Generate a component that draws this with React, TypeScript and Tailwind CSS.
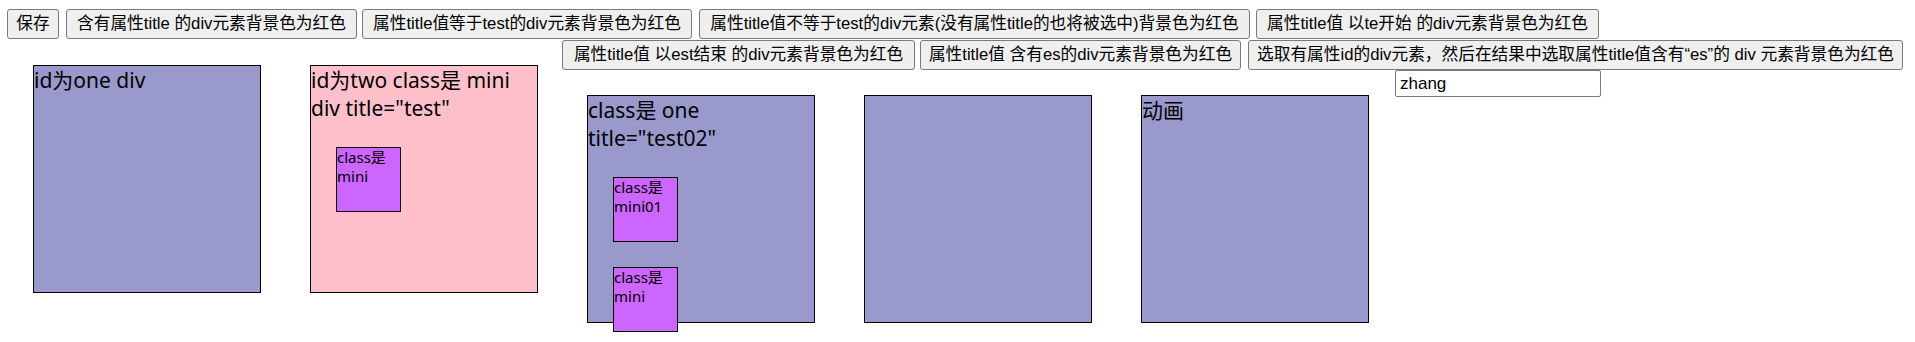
import React from "react";

const btn =
  "h-[30px] shrink-0 flex items-center justify-center bg-[#efefef] border border-[#7a7a7a] rounded-[3px] text-[16.7px] text-black whitespace-nowrap font-['Liberation_Sans','Noto_Sans_CJK_SC',sans-serif] leading-none";

const box =
  "w-[228px] h-[228px] shrink-0 border border-black text-[21px] leading-[28px] text-black font-['Noto_Sans','Noto_Sans_CJK_SC',sans-serif]";

const mini =
  "w-[65px] h-[65px] ml-[25px] mt-[25px] border border-black bg-[#cc66ff] text-[15px] leading-[19px] text-black font-['Noto_Sans','Noto_Sans_CJK_SC',sans-serif]";

export default function App() {
  return (
    <div className="w-[1915px] h-[342px] bg-white overflow-hidden">
      <div className="flex pt-[9px]">
        <button className={`${btn} ml-[7px] w-[52px]`}>保存</button>
        <button className={`${btn} ml-[7px] w-[291px]`}>含有属性title 的div元素背景色为红色</button>
        <button className={`${btn} ml-[5px] w-[330px]`}>属性title值等于test的div元素背景色为红色</button>
        <button className={`${btn} ml-[7px] w-[551px]`}>
          属性title值不等于test的div元素(没有属性title的也将被选中)背景色为红色
        </button>
        <button className={`${btn} ml-[6px] w-[343px]`}>属性title值 以te开始 的div元素背景色为红色</button>
      </div>
      <div className="flex items-start mt-[1px]">
        <div className={`${box} bg-[#9999cc] ml-[33px] mt-[25px]`}>id为one div</div>
        <div className={`${box} bg-[#ffc0cb] ml-[49px] mt-[25px]`}>
          <div>id为two class是 mini div title="test"</div>
          <div className={mini}>class是 mini</div>
        </div>
        <div className="flex flex-col ml-[24px]">
          <div className="flex">
            <button className={`${btn} w-[353px]`}>属性title值 以est结束 的div元素背景色为红色</button>
            <button className={`${btn} ml-[5px] w-[321px]`}>属性title值 含有es的div元素背景色为红色</button>
            <button className={`${btn} ml-[7px] w-[655px]`}>
              选取有属性id的div元素，然后在结果中选取属性title值含有“es”的 div 元素背景色为红色
            </button>
          </div>
          <input
            defaultValue="zhang"
            className="ml-[833px] w-[206px] h-[27px] border border-[#7a7a7a] rounded-[2px] px-[4px] text-[17px] text-black bg-white font-['Liberation_Sans','Noto_Sans_CJK_SC',sans-serif] outline-none"
          />
          <div className="flex items-start mt-[-2px]">
            <div className={`${box} bg-[#9999cc] ml-[25px]`}>
              <div>class是 one title="test02"</div>
              <div className={mini}>class是 mini01</div>
              <div className={mini}>class是 mini</div>
            </div>
            <div className={`${box} bg-[#9999cc] ml-[49px]`}></div>
            <div className={`${box} bg-[#9999cc] ml-[49px]`}>动画</div>
          </div>
        </div>
      </div>
    </div>
  );
}
